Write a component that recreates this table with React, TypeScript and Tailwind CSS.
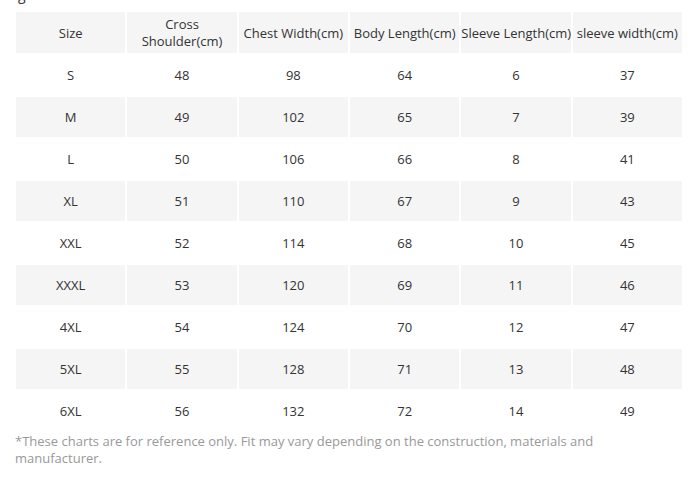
import React from "react";

const headers = ["Size", "Cross Shoulder(cm)", "Chest Width(cm)", "Body Length(cm)", "Sleeve Length(cm)", "sleeve width(cm)"];
const rows: string[][] = [
  ["S", "48", "98", "64", "6", "37"],
  ["M", "49", "102", "65", "7", "39"],
  ["L", "50", "106", "66", "8", "41"],
  ["XL", "51", "110", "67", "9", "43"],
  ["XXL", "52", "114", "68", "10", "45"],
  ["XXXL", "53", "120", "69", "11", "46"],
  ["4XL", "54", "124", "70", "12", "47"],
  ["5XL", "55", "128", "71", "13", "48"],
  ["6XL", "56", "132", "72", "14", "49"],
];

export default function App() {
  return (
    <div className="w-[695px] h-[497px] bg-white overflow-hidden" style={{ fontFamily: '"Open Sans", sans-serif' }}>
      <div className="h-[10px] overflow-hidden">
        <div className="-mt-[14px] ml-[18px] text-[14px] leading-[17px] text-[#333]">g</div>
      </div>
      <table className="ml-[14px] w-[670px] table-fixed border-separate border-spacing-[2px] text-[13px] text-[#333]">
        <thead>
          <tr className="h-[41px]">
            {headers.map((h, i) => (
              <th key={i} className="bg-[#f5f5f5] font-normal text-center leading-[17px] px-0 whitespace-nowrap align-middle pt-[1px]">
                {i === 1 ? (<>Cross<br />Shoulder(cm)</>) : h}
              </th>
            ))}
          </tr>
        </thead>
        <tbody>
          {rows.map((r, ri) => (
            <tr key={ri} className="h-[40px]">
              {r.map((c, ci) => (
                <td key={ci} className={`text-center align-middle pt-[2px] ${ri % 2 === 1 ? "bg-[#f5f5f5]" : "bg-white"}`}>{c}</td>
              ))}
            </tr>
          ))}
        </tbody>
      </table>
      <p className="ml-[15px] mt-[0px] w-[620px] text-[13px] leading-[17px] text-[#999]">
        *These charts are for reference only. Fit may vary depending on the construction, materials and manufacturer.
      </p>
    </div>
  );
}
